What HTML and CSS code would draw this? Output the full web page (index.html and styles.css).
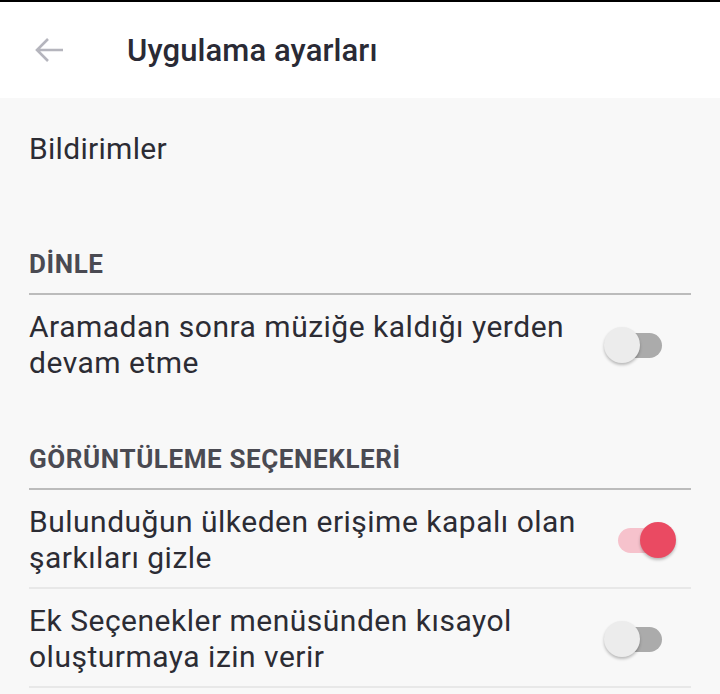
FILE: index.html
```html
<!DOCTYPE html>
<html lang="tr">
<head>
<meta charset="utf-8">
<link rel="stylesheet" href="styles.css">
</head>
<body>
<header class="appbar">
  <svg class="back" width="32" height="28" viewBox="0 0 32 28" aria-hidden="true">
    <path d="M30 14H4M15 3L4 14l11 11" fill="none" stroke="#b5b5bd" stroke-width="2.6" stroke-linecap="butt" stroke-linejoin="miter"/>
  </svg>
  <h1 class="title">Uygulama ayarları</h1>
</header>
<main class="content">
  <div class="nav-row">Bildirimler</div>

  <section class="group">
    <h2 class="group-title">DİNLE</h2>
    <div class="item last">
      <div class="item-text">Aramadan sonra müziğe kaldığı yerden devam etme</div>
      <div class="switch"><span class="track"></span><span class="thumb"></span></div>
    </div>
  </section>

  <section class="group">
    <h2 class="group-title">GÖRÜNTÜLEME SEÇENEKLERİ</h2>
    <div class="item">
      <div class="item-text">Bulunduğun ülkeden erişime kapalı olan şarkıları gizle</div>
      <div class="switch on"><span class="track"></span><span class="thumb"></span></div>
    </div>
    <div class="item">
      <div class="item-text">Ek Seçenekler menüsünden kısayol oluşturmaya izin verir</div>
      <div class="switch"><span class="track"></span><span class="thumb"></span></div>
    </div>
  </section>
</main>
</body>
</html>
```
FILE: styles.css
```css
* { box-sizing: border-box; }
html, body { margin: 0; padding: 0; }
body {
  background: #f8f8f8;
  font-family: Roboto, "Noto Sans", sans-serif;
  color: #2c2c34;
  width: 720px;
  height: 694px;
  overflow: hidden;
}
.appbar {
  height: 98px;
  background: #ffffff;
  border-top: 2px solid #000;
  display: flex;
  align-items: center;
}
.back {
  margin-left: 33px;
  flex: none;
}
.title {
  margin: 0 0 0 62px;
  font-size: 31px;
  font-weight: 500;
  color: #2a2a35;
  letter-spacing: 0.1px;
}
.content {
  padding: 0 29px;
}
.nav-row {
  font-size: 30px;
  line-height: 36px;
  padding: 33px 0 32px;
  letter-spacing: 0.3px;
}
.group-title {
  margin: 0;
  padding: 50px 0 14px;
  font-size: 26px;
  line-height: 30px;
  font-weight: 700;
  color: #4a4a52;
  letter-spacing: 0.6px;
  border-bottom: 2px solid #bcbcbc;
}
.item {
  display: flex;
  align-items: center;
  padding: 14px 0 11px;
  border-bottom: 2px solid #e8e8e8;
}
.item.last { border-bottom-color: transparent; }
.item-text {
  flex: 1;
  font-size: 30px;
  line-height: 36px;
  letter-spacing: 0.5px;
  padding-right: 8px;
}
.switch {
  position: relative;
  flex: none;
  width: 72px;
  height: 36px;
  margin-right: 15px;
}
.track {
  position: absolute;
  left: 14px;
  right: 14px;
  top: 6px;
  height: 25px;
  border-radius: 13px;
  background: #ababab;
}
.thumb {
  position: absolute;
  left: 0;
  top: 0;
  width: 36px;
  height: 36px;
  border-radius: 50%;
  background: #ececec;
  box-shadow: 0 2px 3px rgba(0,0,0,0.25);
}
.switch.on .track { background: #f6c2cc; }
.switch.on .thumb {
  left: 36px;
  background: #ea4a62;
}
```
